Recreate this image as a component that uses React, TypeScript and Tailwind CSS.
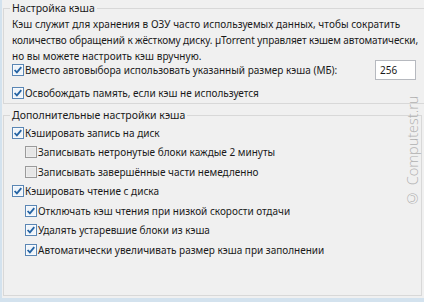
import React from "react";

function Check({ checked }: { checked: boolean }) {
  return (
    <svg width="12" height="12" viewBox="0 0 12 12" className="shrink-0">
      {checked ? (
        <>
          <rect x="0.5" y="0.5" width="11" height="11" fill="#ffffff" stroke="#5a86b4" />
          <rect x="1.5" y="1.5" width="9" height="9" fill="#eef4fa" />
          <path d="M2.6 6 L4.9 8.4 L9.3 3.2" fill="none" stroke="#2463a3" strokeWidth="1.8" />
        </>
      ) : (
        <>
          <rect x="0.5" y="0.5" width="11" height="11" fill="#f4f4f4" stroke="#9a9a9a" />
          <rect x="1.5" y="1.5" width="9" height="9" fill="#e6e6e6" />
        </>
      )}
    </svg>
  );
}

function Row({ checked, label, indent }: { checked: boolean; label: string; indent?: boolean }) {
  return (
    <div className={`flex items-center h-[19.5px] ${indent ? "pl-[15px]" : "pl-[2px]"}`}>
      <Check checked={checked} />
      <span className="ml-[1px] whitespace-nowrap">{label}</span>
    </div>
  );
}

export default function App() {
  return (
    <div
      className="relative w-[424px] h-[302px] overflow-hidden bg-[#f0f0f0] text-[10px] leading-[16px] text-[#1a1a1a] border-l-2 border-b-[4px] border-[#d3e2ee]"
      style={{ fontFamily: '"Noto Sans", "Open Sans", sans-serif' }}
    >
      <fieldset className="ml-[1px] w-[415px] h-[104px] border border-[#d8d8d8] pl-[6px] pr-[6px]">
        <legend className="px-[2px] text-[10.5px]">Настройка кэша</legend>
        <div className="flex flex-col">
          <p className="pl-[2px] leading-[16px] whitespace-nowrap tracking-[0.05px]">
            Кэш служит для хранения в ОЗУ часто используемых данных, чтобы сократить
            <br />
            <span className="tracking-[-0.1px]">количество обращений к жёсткому диску. µTorrent управляет кэшем автоматически,</span>
            <br />
            но вы можете настроить кэш вручную.
          </p>
          <div className="flex items-center h-[20px] pl-[2px] mt-[-4px]">
            <Check checked />
            <span className="ml-[1px] whitespace-nowrap">Вместо автовыбора использовать указанный размер кэша (МБ):</span>
            <div className="ml-auto mr-[2px] w-[41px] h-[20px] bg-white border border-[#b6b9bf] pl-[4px] leading-[18px]">256</div>
          </div>
          <div className="flex items-center h-[16px] mt-[5px] pl-[2px]">
            <Check checked />
            <span className="ml-[1px] whitespace-nowrap">Освобождать память, если кэш не используется</span>
          </div>
        </div>
      </fieldset>
      <fieldset className="ml-[1px] mt-[3px] w-[419px] h-[189px] border border-[#d8d8d8] pl-[6px]">
        <legend className="px-[2px] text-[10.5px]">Дополнительные настройки кэша</legend>
        <div className="flex flex-col">
          <Row checked label="Кэшировать запись на диск" />
          <Row checked={false} indent label="Записывать нетронутые блоки каждые 2 минуты" />
          <Row checked={false} indent label="Записывать завершённые части немедленно" />
          <Row checked label="Кэшировать чтение с диска" />
          <Row checked indent label="Отключать кэш чтения при низкой скорости отдачи" />
          <Row checked indent label="Удалять устаревшие блоки из кэша" />
          <Row checked indent label="Автоматически увеличивать размер кэша при заполнении" />
        </div>
      </fieldset>
      <div
        className="absolute left-[402px] top-[102px] w-[18px] h-[100px] text-[14.5px] leading-[18px] font-light text-[#b0b0b0] whitespace-nowrap rotate-180 flex items-center justify-center"
        style={{ fontFamily: '"Open Sans", sans-serif', writingMode: "vertical-rl" }}
      >
        © Computest.ru
      </div>
    </div>
  );
}
